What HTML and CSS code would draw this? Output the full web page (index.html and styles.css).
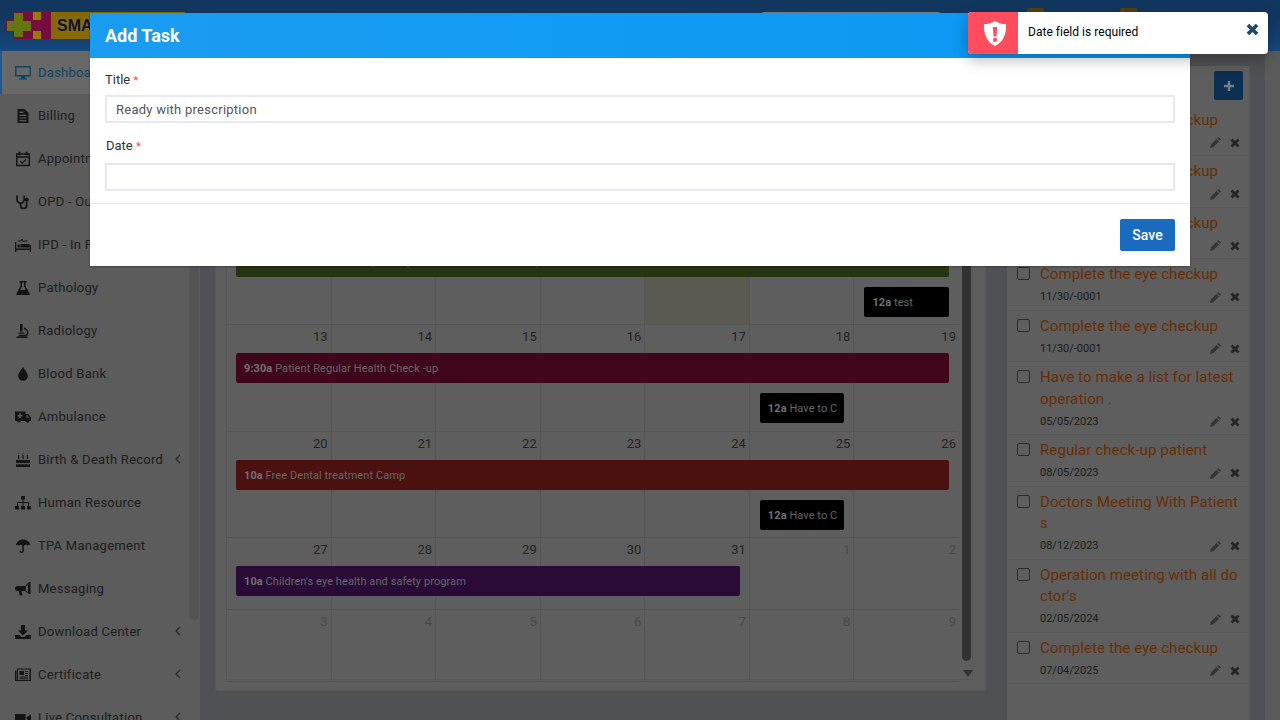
FILE: index.html
```html
<!DOCTYPE html>
<html lang="en">
<head>
<meta charset="utf-8">
<title>Add Task</title>
<link rel="stylesheet" href="styles.css">
</head>
<body>
<svg class="defs" width="0" height="0" aria-hidden="true">
  <symbol id="i-desktop" viewBox="0 0 16 16"><path fill="none" stroke="currentColor" stroke-width="1.4" d="M.8 1.700h14.400v9H.8z"/><path d="M6 11h4v2.200h2V14.500H4v-1.300h2z" fill="currentColor"/></symbol>
  <symbol id="i-file" viewBox="0 0 16 16"><path fill-rule="evenodd" fill="currentColor" d="M2.500 1h7l4 4v10h-11zM4.500 5h4V3.500h-4zM4.500 8h7V6.800h-7zM4.500 10.600h7V9.400h-7zM4.500 13.200h7V12h-7z"/></symbol>
  <symbol id="i-cal" viewBox="0 0 16 16"><path fill="none" stroke="currentColor" stroke-width="1.4" d="M1.700 3h12.600v11.500H1.700zM1.700 6h12.600"/><path fill="none" stroke="currentColor" stroke-width="1.8" d="M4.500.8v3.400M11.500.8v3.400"/><path fill="none" stroke="currentColor" stroke-width="1.2" d="M5 10l2.200 2.200L11 8.400"/></symbol>
  <symbol id="i-steth" viewBox="0 0 16 16"><path fill="none" stroke="currentColor" stroke-width="1.7" d="M2 1.500v4a3.600 3.600 0 0 0 7.200 0v-4M5.600 9v2.500a3 3 0 0 0 6 0V8"/><circle cx="11.800" cy="5.800" r="2" fill="currentColor"/></symbol>
  <symbol id="i-bed" viewBox="0 0 16 16"><path fill="currentColor" d="M0 5h1.300v6.500h13.400V8H16v7h-1.300v-2H1.300v2H0zM2.500 7.500h2.300v3H2.500zM5.500 7h9v3.500h-9z"/><path fill="none" stroke="currentColor" d="M3 4h3l1-2 1.500 3 1-1h3"/></symbol>
  <symbol id="i-flask" viewBox="0 0 16 16"><path fill="currentColor" fill-rule="evenodd" d="M4.500 1h7v1.400h-1V6l4 7.500c.4.900-.1 1.600-1 1.600H2.500c-.9 0-1.400-.7-1-1.600L5.500 6V2.400h-1zM7 2.400v4L5.200 10h5.600L9 6.400v-4z"/></symbol>
  <symbol id="i-micro" viewBox="0 0 16 16"><path fill="currentColor" d="M5 1h2.600v7.500H5zM1.500 13.500h11v1.500h-11zM9 4.500c3 .8 4.500 3 4.500 5.200 0 1.500-.8 2.800-2 3.500H4v-1.400h6.500c1-.4 1.500-1.200 1.500-2.200 0-1.400-1-2.700-3-3.300z"/><path fill="currentColor" d="M3.500 9.500h6v1.300h-6z"/></symbol>
  <symbol id="i-tint" viewBox="0 0 16 16"><path fill="currentColor" d="M8 1c2 3.300 4.800 5.800 4.800 9A4.800 4.800 0 0 1 3.200 10C3.200 6.800 6 4.300 8 1z"/></symbol>
  <symbol id="i-amb" viewBox="0 0 16 16"><path fill="currentColor" fill-rule="evenodd" d="M0 2.500h10.500V5H13l3 3.500V12h-1.600a2 2 0 0 1-3.900 0H6a2 2 0 0 1-3.900 0H0zM4.300 4.300v1.600H2.700v1.500h1.600V9h1.500V7.400h1.600V5.900H5.800V4.300zM11.500 6.200V8.500h2.800l-2-2.300z"/><circle cx="4" cy="12" r="1.100" fill="currentColor"/><circle cx="12.400" cy="12" r="1.100" fill="currentColor"/></symbol>
  <symbol id="i-cake" viewBox="0 0 16 16"><path fill="currentColor" d="M3 3h1.200v4H3zM7.400 3h1.200v4H7.400zM11.800 3h1.200v4h-1.200zM3.200 1l.6 1.300H2.800zM7.800 1l.6 1.300H7.200zM12.200 1l.6 1.300h-1zM1 8h14v2.500c-1.200 1-2.300 1-3.500 0-1.200 1-2.300 1-3.500 0-1.200 1-2.300 1-3.500 0-1.200 1-2.300 1-3.500 0zM1 12c1.200.7 2.300.7 3.500 0 1.200.7 2.300.7 3.500 0 1.200.7 2.300.7 3.500 0 1.200.7 2.300.7 3.500 0v3H1z"/></symbol>
  <symbol id="i-site" viewBox="0 0 16 16"><path fill="currentColor" d="M6 1h4v3.500H6zM0 11h4v3.500H0zM6 11h4v3.500H6zM12 11h4v3.500h-4zM7.500 4.500h1V7h5.500v4h-1V8H8.500v3h-1V8H3v3H2V7h5.500z"/></symbol>
  <symbol id="i-umb" viewBox="0 0 16 16"><path fill="currentColor" d="M8 1.500c3.800 0 6.900 2.500 7.500 6-1-1-2.100-1-3 .2-.9-1.200-2.800-1.200-3.700 0v5a2.300 2.300 0 0 1-4.600 0h1.500c0 1.100 1.600 1.100 1.600 0v-5c-.9-1.200-2.300-1.200-3.300 0-.9-1.200-2-1.200-3 0C1.100 4 4.200 1.500 8 1.500z"/></symbol>
  <symbol id="i-horn" viewBox="0 0 16 16"><path fill="currentColor" d="M14 1h1.500v12H14l-4-3H6.500l1 4.500H4.800L3.600 10H2.500C1 10 0 9 0 7.500S1 5 2.500 5H10zM13 3.500L10.800 5.600v3.800L13 11z"/></symbol>
  <symbol id="i-down" viewBox="0 0 16 16"><path fill="currentColor" d="M6 1h4v5.500h3L8 11.500l-5-5h3zM0 11h4.500L6.500 13h3l2-2H16v4H0z"/></symbol>
  <symbol id="i-news" viewBox="0 0 16 16"><path fill="currentColor" fill-rule="evenodd" d="M0 3.500h1.500V13H14.500V2.500H3V13H2V1.500h14V14H0zM4.500 4H9v4H4.500zM10 4h3v1h-3zM10 6h3v1h-3zM10 8h3v.9h-3zM4.500 9.500H13v1H4.500zM4.500 11.300H13v.9H4.500z"/></symbol>
  <symbol id="i-video" viewBox="0 0 16 16"><path fill="currentColor" d="M0 4h10.500v8H0zM11.500 7.200L16 4v8l-4.500-3.200z"/></symbol>
  <symbol id="i-pencil" viewBox="0 0 12 12"><path fill="currentColor" d="M9.200 0l2.800 2.800-1.300 1.300-2.800-2.800zM7.100 2.100l2.800 2.800L3.600 11.200 0 12l.8-3.600z"/></symbol>
  <symbol id="i-x" viewBox="0 0 12 12"><path fill="currentColor" d="M3 .6L6 3.600l3-3L11.400 3l-3 3 3 3L9 11.400l-3-3-3 3L.6 9l3-3-3-3z"/></symbol>
</svg>

<div class="app">
  <header class="topbar">
    <div class="logo">
      <svg class="logo-mark" width="46" height="28" viewBox="0 0 46 28">
        <path fill="#c4176a" d="M8 0h38v28H8v-8H0V8h8z"/>
        <path fill="#aac21e" d="M9 2h9v8h8v10h-8v6H9v-6H2V10h7z"/>
        <path fill="#ffcb08" d="M28 1h8v8h-8zM28 20h8v8h-8z"/>
      </svg>
      <div class="logo-banner">SMART HOSPITAL</div>
    </div>
    <div class="searchbox"></div>
    <span class="badge badge-a"></span>
    <span class="badge badge-b"></span>
  </header>

  <div class="layout">
    <nav class="sidebar">
      <a class="nav-item active"><svg class="nav-icon"><use href="#i-desktop"/></svg><span>Dashboard</span></a>
      <a class="nav-item"><svg class="nav-icon"><use href="#i-file"/></svg><span>Billing</span></a>
      <a class="nav-item"><svg class="nav-icon"><use href="#i-cal"/></svg><span>Appointment</span></a>
      <a class="nav-item"><svg class="nav-icon"><use href="#i-steth"/></svg><span>OPD - Out Patient</span></a>
      <a class="nav-item"><svg class="nav-icon"><use href="#i-bed"/></svg><span>IPD - In Patient</span></a>
      <a class="nav-item"><svg class="nav-icon"><use href="#i-flask"/></svg><span>Pathology</span></a>
      <a class="nav-item"><svg class="nav-icon"><use href="#i-micro"/></svg><span>Radiology</span></a>
      <a class="nav-item"><svg class="nav-icon"><use href="#i-tint"/></svg><span>Blood Bank</span></a>
      <a class="nav-item"><svg class="nav-icon"><use href="#i-amb"/></svg><span>Ambulance</span></a>
      <a class="nav-item has-sub"><svg class="nav-icon"><use href="#i-cake"/></svg><span>Birth &amp; Death Record</span><svg class="chev" viewBox="0 0 6 10"><path d="M5 1L1 5l4 4" fill="none" stroke="currentColor" stroke-width="1.200"/></svg></a>
      <a class="nav-item"><svg class="nav-icon"><use href="#i-site"/></svg><span>Human Resource</span></a>
      <a class="nav-item"><svg class="nav-icon"><use href="#i-umb"/></svg><span>TPA Management</span></a>
      <a class="nav-item"><svg class="nav-icon"><use href="#i-horn"/></svg><span>Messaging</span></a>
      <a class="nav-item has-sub"><svg class="nav-icon"><use href="#i-down"/></svg><span>Download Center</span><svg class="chev" viewBox="0 0 6 10"><path d="M5 1L1 5l4 4" fill="none" stroke="currentColor" stroke-width="1.200"/></svg></a>
      <a class="nav-item has-sub"><svg class="nav-icon"><use href="#i-news"/></svg><span>Certificate</span><svg class="chev" viewBox="0 0 6 10"><path d="M5 1L1 5l4 4" fill="none" stroke="currentColor" stroke-width="1.200"/></svg></a>
      <a class="nav-item has-sub"><svg class="nav-icon"><use href="#i-video"/></svg><span>Live Consultation</span><svg class="chev" viewBox="0 0 6 10"><path d="M5 1L1 5l4 4" fill="none" stroke="currentColor" stroke-width="1.200"/></svg></a>
      <div class="side-scroll"></div>
    </nav>

    <main class="content">
      <section class="cal-card">
        <div class="cal-inner">
          <div class="cal-grid">
            <div class="cal-top"></div>
            <div class="week week-first">
              <div class="cell"></div><div class="cell"></div><div class="cell"></div><div class="cell"></div><div class="cell today"></div><div class="cell"></div><div class="cell"></div>
              <div class="event ev-green ev-full"><b>10a</b> Free Medical Check-up Test (For Senior Citizens Above)</div>
              <div class="event ev-black ev-c7"><b>12a</b> test</div>
            </div>
            <div class="week">
              <div class="cell"><i>13</i></div><div class="cell"><i>14</i></div><div class="cell"><i>15</i></div><div class="cell"><i>16</i></div><div class="cell"><i>17</i></div><div class="cell"><i>18</i></div><div class="cell"><i>19</i></div>
              <div class="event ev-crimson ev-full"><b>9:30a</b> Patient Regular Health Check -up</div>
              <div class="event ev-black ev-c6"><b>12a</b> Have to C</div>
            </div>
            <div class="week week-third">
              <div class="cell"><i>20</i></div><div class="cell"><i>21</i></div><div class="cell"><i>22</i></div><div class="cell"><i>23</i></div><div class="cell"><i>24</i></div><div class="cell"><i>25</i></div><div class="cell"><i>26</i></div>
              <div class="event ev-red ev-full"><b>10a</b> Free Dental treatment Camp</div>
              <div class="event ev-black ev-c6"><b>12a</b> Have to C</div>
            </div>
            <div class="week week-short">
              <div class="cell"><i>27</i></div><div class="cell"><i>28</i></div><div class="cell"><i>29</i></div><div class="cell"><i>30</i></div><div class="cell"><i>31</i></div><div class="cell off"><i>1</i></div><div class="cell off"><i>2</i></div>
              <div class="event ev-purple ev-five"><b>10a</b> Children's eye health and safety program</div>
            </div>
            <div class="week week-short">
              <div class="cell off"><i>3</i></div><div class="cell off"><i>4</i></div><div class="cell off"><i>5</i></div><div class="cell off"><i>6</i></div><div class="cell off"><i>7</i></div><div class="cell off"><i>8</i></div><div class="cell off"><i>9</i></div>
            </div>
          </div>
          <div class="cal-scroll"><div class="cal-thumb"></div><div class="cal-arrow"></div></div>
        </div>
      </section>

      <aside class="tasks">
        <div class="tasks-head"><span class="add-btn"><svg width="10" height="10" viewBox="0 0 10 10"><path fill="currentColor" d="M3.800 0h2.400v3.800H10v2.400H6.200V10H3.800V6.200H0V3.800h3.800z"/></svg></span></div>
        <div class="task"><span class="check"></span><div class="task-main"><div class="task-title">Complete the eye checkup</div><div class="task-meta"><span>11/30/-0001</span><span class="task-actions"><svg class="ic-p"><use href="#i-pencil"/></svg><svg class="ic-x"><use href="#i-x"/></svg></span></div></div></div>
        <div class="task"><span class="check"></span><div class="task-main"><div class="task-title">Complete the eye checkup</div><div class="task-meta"><span>11/30/-0001</span><span class="task-actions"><svg class="ic-p"><use href="#i-pencil"/></svg><svg class="ic-x"><use href="#i-x"/></svg></span></div></div></div>
        <div class="task"><span class="check"></span><div class="task-main"><div class="task-title">Complete the eye checkup</div><div class="task-meta"><span>11/30/-0001</span><span class="task-actions"><svg class="ic-p"><use href="#i-pencil"/></svg><svg class="ic-x"><use href="#i-x"/></svg></span></div></div></div>
        <div class="task"><span class="check"></span><div class="task-main"><div class="task-title">Complete the eye checkup</div><div class="task-meta"><span>11/30/-0001</span><span class="task-actions"><svg class="ic-p"><use href="#i-pencil"/></svg><svg class="ic-x"><use href="#i-x"/></svg></span></div></div></div>
        <div class="task"><span class="check"></span><div class="task-main"><div class="task-title">Complete the eye checkup</div><div class="task-meta"><span>11/30/-0001</span><span class="task-actions"><svg class="ic-p"><use href="#i-pencil"/></svg><svg class="ic-x"><use href="#i-x"/></svg></span></div></div></div>
        <div class="task"><span class="check"></span><div class="task-main"><div class="task-title">Have to make a list for latest operation .</div><div class="task-meta"><span>05/05/2023</span><span class="task-actions"><svg class="ic-p"><use href="#i-pencil"/></svg><svg class="ic-x"><use href="#i-x"/></svg></span></div></div></div>
        <div class="task"><span class="check"></span><div class="task-main"><div class="task-title">Regular check-up patient</div><div class="task-meta"><span>08/05/2023</span><span class="task-actions"><svg class="ic-p"><use href="#i-pencil"/></svg><svg class="ic-x"><use href="#i-x"/></svg></span></div></div></div>
        <div class="task"><span class="check"></span><div class="task-main"><div class="task-title">Doctors Meeting With Patients</div><div class="task-meta"><span>08/12/2023</span><span class="task-actions"><svg class="ic-p"><use href="#i-pencil"/></svg><svg class="ic-x"><use href="#i-x"/></svg></span></div></div></div>
        <div class="task"><span class="check"></span><div class="task-main"><div class="task-title">Operation meeting with all doctor's</div><div class="task-meta"><span>02/05/2024</span><span class="task-actions"><svg class="ic-p"><use href="#i-pencil"/></svg><svg class="ic-x"><use href="#i-x"/></svg></span></div></div></div>
        <div class="task"><span class="check"></span><div class="task-main"><div class="task-title">Complete the eye checkup</div><div class="task-meta"><span>07/04/2025</span><span class="task-actions"><svg class="ic-p"><use href="#i-pencil"/></svg><svg class="ic-x"><use href="#i-x"/></svg></span></div></div></div>
      </aside>
    </main>
    <div class="page-scroll"></div>
  </div>

  <div class="backdrop"></div>

  <div class="modal">
    <div class="modal-head">Add Task</div>
    <div class="modal-body">
      <label class="field-label">Title <em>*</em></label>
      <div class="input">Ready with prescription</div>
      <label class="field-label field-date">Date <em>*</em></label>
      <div class="input input-date"></div>
    </div>
    <div class="modal-foot"><button class="save" type="button">Save</button></div>
  </div>

  <div class="toast">
    <div class="toast-icon">
      <svg width="24" height="25" viewBox="0 0 24 25"><path fill="#fff" d="M12 0c3 2 6.500 3 11 3.200.5 9.500-2.500 17.500-11 21.800C3.500 20.700.5 12.700 1 3.200 5.500 3 9 2 12 0z"/><path fill="#ff4d5e" d="M9.800 6h4.400l-.8 9.500h-2.800zM12 16.800a2.100 2.100 0 1 1 0 4.200 2.100 2.100 0 0 1 0-4.200z"/></svg>
    </div>
    <div class="toast-text">Date field is required</div>
    <svg class="toast-close"><use href="#i-x"/></svg>
  </div>
</div>
</body>
</html>
```

FILE: styles.css
```css
* { box-sizing: border-box; }
html, body { margin: 0; padding: 0; height: 100%; overflow: hidden; }
body { font-family: Roboto, "Liberation Sans", sans-serif; font-size: 13px; color: #333; }
.defs { position: absolute; }

.app { position: relative; width: 1280px; height: 720px; overflow: hidden; display: flex; flex-direction: column; background: #84878c; }

/* top bar */
.topbar { flex: 0 0 51px; display: flex; align-items: flex-start; background: linear-gradient(#1e5c9e, #1e5c9e 30%, #267ad2); }
.logo { display: flex; margin: 11px 0 0 5px; width: 181px; }
.logo-mark { display: block; flex: none; }
.logo-banner { flex: 1; height: 27px; margin-top: 1px; background: #dfae08; border-radius: 0 3px 3px 0; padding-left: 6px; font: bold 16px/27px "Liberation Sans", sans-serif; color: #222; white-space: nowrap; overflow: hidden; text-shadow: 0 0 2px #ccc; }
.searchbox { width: 188px; height: 30px; margin: 12px 0 0 571px; border-radius: 8px 8px 0 0; background: #bcd0e4; }
.badge { width: 17px; height: 16px; margin-top: 8px; border-radius: 2px; background: #96691b; }
.badge-a { margin-left: 82px; }
.badge-b { margin-left: 76px; }

.layout { flex: 1; min-height: 0; display: flex; }

/* sidebar */
.sidebar { position: relative; flex: 0 0 200px; height: 669px; overflow: hidden; background: #999; }
.nav-item { display: flex; align-items: center; height: 43px; padding-left: 15px; font-size: 13px; letter-spacing: .27px; color: #333; white-space: nowrap; }
.nav-item span { position: relative; top: -.5px; }
.nav-item.active { padding-left: 13px; border-left: 2px solid #2d96fa; background: #adadad; color: #17749c; }
.nav-icon { flex: none; width: 16px; height: 16px; margin-right: 7px; color: #222; }
.active .nav-icon { color: #17749c; }
.chev { position: absolute; left: 175px; width: 6px; height: 10px; margin-top: -2px; color: #444; }
.side-scroll { position: absolute; left: 189px; top: 0; width: 10px; height: 569px; border-radius: 0 0 5px 5px; background: #8c8c8c; }

/* content */
.content { flex: 1; min-width: 0; display: flex; align-items: flex-start; padding: 15px 0 0 15px; }

.cal-card { flex: 0 0 771px; min-width: 0; height: 625px; padding: 0 12px 10px 10px; background: #9d9d9d; border: 1px solid #949494; border-radius: 3px; }
.cal-inner { display: flex; height: 100%; min-width: 0; border-right: 1px solid #949494; border-bottom: 1px solid #949494; }
.cal-grid { flex: 0 0 733px; min-width: 0; border-left: 1px solid #909090; }
.cal-top { height: 151px; }
.cal-scroll { flex: 1; position: relative; padding-left: 3px; }
.cal-thumb { width: 9px; height: 594px; border-radius: 0 0 5px 5px; background: #555; }
.cal-arrow { width: 0; height: 0; margin: 9px 0 0 1px; border: 5px solid transparent; border-top: 7px solid #555; border-bottom: 0; }

.week { display: grid; grid-template-columns: repeat(7, minmax(0, 1fr)); grid-template-rows: 28px 30px 10px 30px 1fr; height: 107px; border-bottom: 1px solid #909090; }
.week-first { grid-template-rows: 29px 30px 10px 30px 1fr; }
.week-third { height: 106px; }
.week-short { height: 72px; grid-template-rows: 28px 30px 1fr; }
.cell { grid-row: 1 / -1; border-right: 1px solid #909090; padding: 4px 3px 0 0; text-align: right; font-size: 13px; line-height: 16px; color: #3a3a3a; }
.cell:nth-child(1) { grid-column: 1; } .cell:nth-child(2) { grid-column: 2; } .cell:nth-child(3) { grid-column: 3; }
.cell:nth-child(4) { grid-column: 4; } .cell:nth-child(5) { grid-column: 5; } .cell:nth-child(6) { grid-column: 6; }
.cell:nth-child(7) { grid-column: 7; border-right: 0; }
.cell i { font-style: normal; }
.cell.off { color: #7b7b7b; }
.cell.today { background: #969685; }

.event { grid-row: 2; margin: 0 10px 0 9px; padding: 1px 8px 0; border-radius: 2px; font-size: 11px; letter-spacing: .08px; line-height: 29px; color: #aaa; white-space: nowrap; overflow: hidden; }
.event b { font-weight: 700; color: #bbb; }
.ev-full { grid-column: 1 / -1; }
.ev-five { grid-column: 1 / 6; }
.ev-c6 { grid-column: 6; grid-row: 4; margin-left: 10px; }
.ev-c7 { grid-column: 7; grid-row: 4; margin-left: 10px; }
.ev-green { padding-top: 0; line-height: 30px; background: #3f581d; }
.ev-crimson { background: #6c0b2d; }
.ev-red { background: #7e1c1c; }
.ev-purple { background: #47125a; }
.ev-black { background: #000; }

/* tasks */
.tasks { flex: 0 0 243px; min-width: 0; margin-left: 21px; height: 680px; background: #9d9d9d; border-right: 1px solid #949494; }
.tasks-head { display: flex; justify-content: flex-end; height: 38.5px; padding: 5px 6px 0 0; }
.add-btn { display: flex; align-items: center; justify-content: center; width: 29px; height: 29px; border-radius: 2px; background: #164f87; color: #b8d4ea; }
.task { display: flex; padding: 5px 9px 0 10px; border-bottom: 1px solid #959595; }
.check { flex: none; width: 13px; height: 13px; margin-top: 3px; margin-right: 10px; border: 1px solid #484848; border-radius: 2px; }
.task-main { flex: 1; min-width: 0; }
.task-title { font-size: 15px; letter-spacing: .1px; line-height: 21.5px; color: #a94d08; word-break: break-all; }
.task-meta { display: flex; justify-content: space-between; align-items: center; height: 24px; font-size: 11px; color: #303030; padding-bottom: 2px; }
.task-actions { display: flex; gap: 9px; align-items: center; margin-top: 1px; }
.ic-p { width: 11px; height: 11px; color: #585858; }
.ic-x { width: 10px; height: 10px; color: #3e3e3e; }

.page-scroll { flex: 0 0 15px; background: #989898; }

/* overlay */
.backdrop { position: absolute; inset: 0; background: rgba(0, 0, 0, .4); }

.modal { position: absolute; left: 90px; top: 13px; width: 1100px; height: 253px; background: #fff; box-shadow: 0 1px 2px rgba(0, 0, 0, .3); }
.modal-head { height: 45px; padding: 0 15px; background: linear-gradient(90deg, #1a9cf0, #0a98f5); font-size: 18px; font-weight: 700; line-height: 45px; color: #fff; }
.modal-body { padding: 13px 15px 0 15px; height: 146px; border-bottom: 1px solid #e6e6ec; }
.field-label { display: block; position: relative; top: 1px; font-size: 13px; line-height: 16px; color: #333; }
.field-label em { font-style: normal; color: #f44; font-size: 11px; }
.field-date { margin-top: 14px; padding-left: 1px; }
.input { height: 28px; margin-top: 7px; padding: 0 9px; border: 2px solid #e8e8f0; font-size: 13px; letter-spacing: .25px; line-height: 25px; color: #555; }
.input-date { margin-top: 9px; }
.modal-foot { display: flex; justify-content: flex-end; padding: 15px 15px 0 0; }
.save { width: 55px; height: 32px; padding: 0; border: 0; border-radius: 2px; background: #1a6bc0; color: #fff; font: 500 14px Roboto, sans-serif; }

.toast { position: absolute; left: 968px; top: 12px; width: 300px; height: 42px; display: flex; align-items: center; background: #fff; border-radius: 4px; overflow: hidden; box-shadow: 0 5px 15px rgba(0, 0, 0, .3); }
.toast-icon { flex: 0 0 50px; height: 100%; display: flex; align-items: center; justify-content: center; padding-left: 3px; background: #ff4d5e; }
.toast-text { flex: 1; padding: 0 0 3px 10px; font-size: 12px; letter-spacing: .03px; color: #000; }
.toast-close { flex: none; width: 13px; height: 13px; margin: -7px 9px 0 0; color: #1d4a70; }
```
